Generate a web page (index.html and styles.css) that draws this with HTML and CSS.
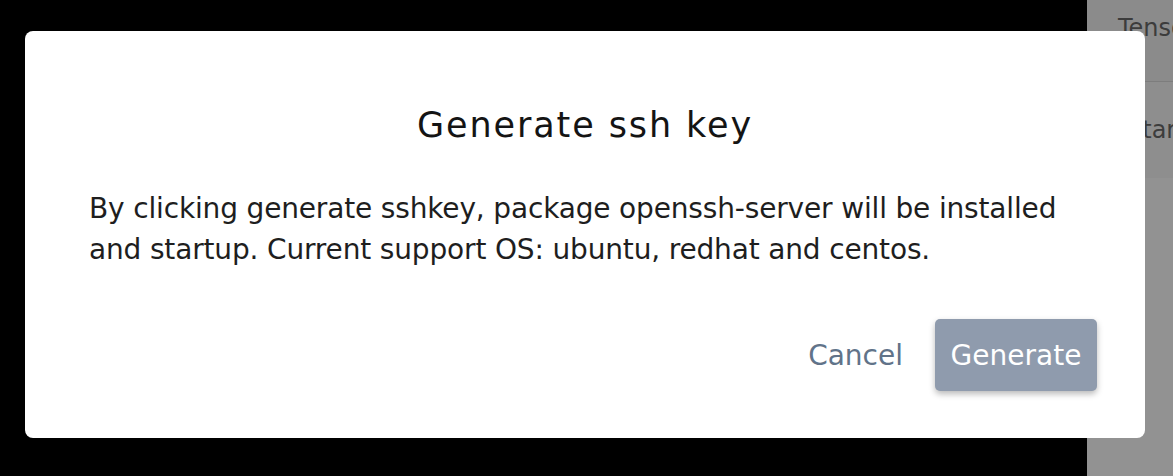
FILE: index.html
```html
<!DOCTYPE html>
<html>
<head>
<meta charset="utf-8">
<link rel="stylesheet" href="styles.css">
</head>
<body>
<div class="screen">
  <div class="backdrop"></div>
  <aside class="page">
    <div class="page-head">Tensor</div>
    <div class="page-row">Start</div>
    <div class="page-rest"></div>
  </aside>
  <div class="modal">
    <h2 class="modal-title">Generate ssh key</h2>
    <p class="modal-text">By clicking generate sshkey, package openssh-server will be installed and startup. Current support OS: ubuntu, redhat and centos.</p>
    <div class="modal-actions">
      <button class="btn-cancel">Cancel</button>
      <button class="btn-generate">Generate</button>
    </div>
  </div>
</div>
</body>
</html>
```
FILE: styles.css
```css
* { box-sizing: border-box; }
html, body { margin: 0; padding: 0; }
body {
  width: 1173px;
  height: 476px;
  overflow: hidden;
  font-family: "DejaVu Sans", sans-serif;
}
.screen {
  position: relative;
  display: flex;
  width: 1173px;
  height: 476px;
}
.backdrop {
  flex: 1;
  background: #000;
}
.page {
  width: 86px;
  display: flex;
  flex-direction: column;
  background: #929292;
  color: #3c3c3c;
  font-size: 24px;
  overflow: hidden;
  white-space: nowrap;
}
.page-head {
  height: 82px;
  padding: 14px 0 0 31px;
  background: #8b8b8b;
  border-bottom: 1px solid #7d7d7d;
}
.page-row {
  height: 96px;
  padding: 34px 0 0 40px;
  background: #8e8e8e;
}
.page-rest { flex: 1; }
.modal {
  position: absolute;
  left: 25px;
  top: 31px;
  width: 1120px;
  height: 407px;
  background: #fff;
  border-radius: 8px;
  padding: 74px 64px 0 64px;
  display: flex;
  flex-direction: column;
}
.modal-title {
  margin: 0;
  text-align: center;
  font-weight: normal;
  font-size: 35px;
  letter-spacing: 1.9px;
  line-height: 40px;
  color: #141414;
}
.modal-text {
  margin: 43px 0 0 0;
  font-size: 28px;
  letter-spacing: -0.16px;
  line-height: 41px;
  color: #1e1e1e;
}
.modal-actions {
  margin-top: 49px;
  display: flex;
  justify-content: flex-end;
  align-items: center;
  gap: 32px;
  margin-right: -16px;
}
.btn-cancel {
  border: none;
  background: none;
  font-family: inherit;
  font-size: 28px;
  color: #617389;
  padding: 0;
}
.btn-generate {
  border: none;
  background: #8f9bad;
  color: #fff;
  font-family: inherit;
  font-size: 28px;
  height: 72px;
  width: 162px;
  padding: 0;
  border-radius: 5px;
  box-shadow: 0 3px 6px rgba(0,0,0,0.28);
}
```
